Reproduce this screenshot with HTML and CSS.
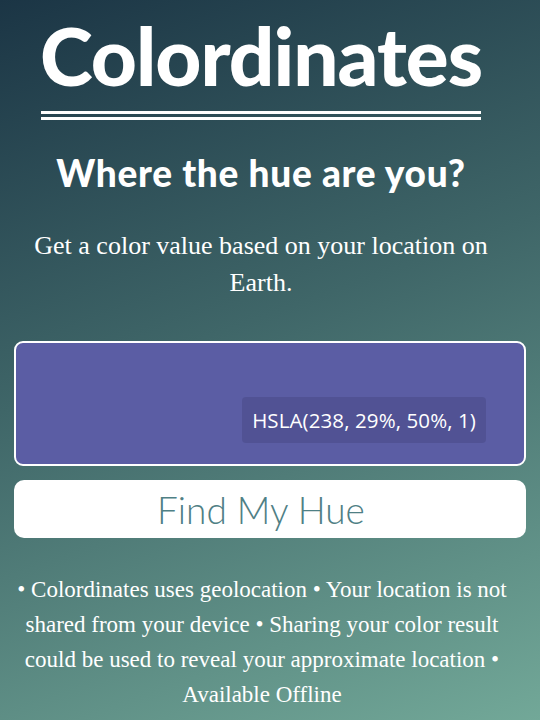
FILE: index.html
```html
<!DOCTYPE html>
<html lang="en">
<head>
<meta charset="utf-8">
<title>Colordinates</title>
<link rel="stylesheet" href="styles.css">
</head>
<body>
<main class="page">
  <header class="masthead">
    <h1 class="title">Colordinates</h1>
    <div class="rule"></div>
  </header>
  <h2 class="subtitle">Where the hue are you?</h2>
  <p class="intro">Get a color value based on your location on Earth.</p>
  <section class="swatch" style="background-color: hsla(238, 29%, 50%, 1);">
    <span class="swatch-label">HSLA(238, 29%, 50%, 1)</span>
  </section>
  <button class="find-btn" type="button">Find My Hue</button>
  <p class="notes">• Colordinates uses geolocation • Your location is not shared from your device • Sharing your color result could be used to reveal your approximate location • Available Offline</p>
</main>
</body>
</html>
```

FILE: styles.css
```css
html, body {
  margin: 0;
  padding: 0;
  height: 100%;
}
body {
  background: linear-gradient(160deg, #1b3545 0%, #3f6668 45%, #72a898 100%);
  color: #fff;
  overflow: hidden;
}
.page {
  display: flex;
  flex-direction: column;
  align-items: stretch;
  padding: 0 14px;
  box-sizing: border-box;
  height: 720px;
}
.masthead {
  display: flex;
  flex-direction: column;
  align-items: center;
  padding: 11px 18px 0 0;
}
.title {
  margin: 0;
  font-family: "Lato", sans-serif;
  font-weight: 900;
  font-size: 80px;
  line-height: 88px;
  letter-spacing: -1px;
}
.rule {
  width: 440px;
  height: 3px;
  margin-top: 12px;
  border-top: 3px solid #fff;
  border-bottom: 3px solid #fff;
}
.subtitle {
  margin: 31px 18px 0 0;
  text-align: center;
  font-family: "Lato", sans-serif;
  font-weight: 900;
  font-size: 37px;
  line-height: 44px;
  letter-spacing: 0.7px;
}
.intro {
  margin: 32px 18px 0 0;
  text-align: center;
  font-family: "Liberation Serif", serif;
  font-size: 26px;
  line-height: 37px;
}
.swatch {
  margin-top: 40px;
  height: 125px;
  box-sizing: border-box;
  border: 2px solid #fff;
  border-radius: 9px;
  display: flex;
  align-items: flex-end;
  justify-content: flex-end;
  padding: 0 38px 21px 0;
}
.swatch-label {
  background: rgba(20, 20, 60, 0.14);
  border-radius: 4px;
  padding: 0 10px;
  height: 46px;
  line-height: 46px;
  font-family: "Open Sans", sans-serif;
  font-size: 20.5px;
  letter-spacing: 0.1px;
  color: #fff;
}
.find-btn {
  margin-top: 14px;
  height: 58px;
  border: none;
  border-radius: 10px;
  background: #fff;
  color: #4f8085;
  font-family: "Lato", sans-serif;
  font-weight: 300;
  font-size: 37px;
  padding: 0 18px 0 0;
}
.notes {
  margin: 34px 16px 0 0;
  text-align: center;
  font-family: "Liberation Serif", serif;
  font-size: 23px;
  line-height: 35px;
}
```
